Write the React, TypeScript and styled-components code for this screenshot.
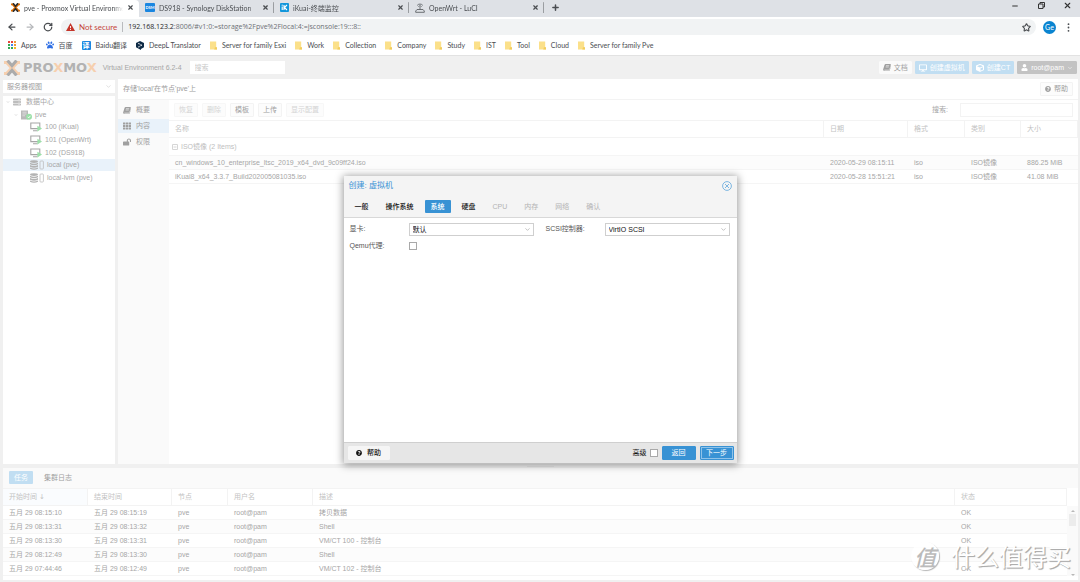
import React from "react";
import styled, { createGlobalStyle, css } from "styled-components";
import {
  FaDesktop,
  FaCube,
  FaUser,
  FaQuestionCircle,
  FaTh,
  FaLockOpen,
  FaServer,
  FaPaw,
} from "react-icons/fa";
import { X, Plus, Minus, ArrowLeft, ArrowRight, RotateCw, Star, ChevronDown } from "lucide-react";

const Global = createGlobalStyle`
  * { box-sizing: border-box; }
  html, body, #root { height: 100%; }
  body {
    margin: 0;
    background: #f0f0f0;
    color: #a6a6a6;
    font: 7px/10px "Liberation Sans", "Noto Sans CJK SC", sans-serif;
  }
  button, input, select { font: inherit; color: inherit; margin: 0; }
  button { cursor: pointer; white-space: nowrap; }
  svg { flex: none; display: block; }
`;

const Page = styled.div`
  min-height: 100%;
  display: flex;
  flex-direction: column;
`;

/* ---------- browser frame ---------- */

const Chrome = styled.header`
  background: #fff;
  color: #4a4d51;
  font-family: Lato, "Noto Sans CJK SC", sans-serif;
  border-bottom: 1px solid #e2e2e2;
`;

const TabStrip = styled.div`
  display: flex;
  align-items: stretch;
  height: 17px;
  background: #dee1e6;
`;

const BrowserTab = styled.div<{ $active?: boolean; $divided?: boolean }>`
  display: flex;
  align-items: center;
  gap: 4px;
  flex: 0 1 ${(p) => (p.$active ? 139 : 135)}px;
  min-width: 0;
  padding: 0 5px 2px ${(p) => (p.$active ? 11 : 6)}px;
  background: ${(p) => (p.$active ? "#fff" : "transparent")};
  border-radius: 0 4px 0 0;
  ${(p) =>
    p.$divided &&
    css`
      background: linear-gradient(#9a9da1, #9a9da1) right 2px / 1px 11px no-repeat;
    `}
`;

const TabTitle = styled.span`
  flex: 1;
  min-width: 0;
  overflow: hidden;
  white-space: nowrap;
  mask-image: linear-gradient(to right, #000 90%, transparent);
`;

const IconButton = styled.button`
  display: flex;
  align-items: center;
  justify-content: center;
  padding: 0;
  border: 0;
  background: none;
`;

const NewTab = styled(IconButton)`
  width: 22px;
  padding-bottom: 2px;
`;

const WindowControls = styled.div`
  display: flex;
  margin-left: auto;
  padding-bottom: 6px;
  color: #333;

  button {
    width: 26px;
  }
`;

const AddressRow = styled.div`
  display: flex;
  align-items: center;
  height: 20px;
  padding: 0 10px 0 7px;
`;

const NavButtons = styled.div`
  display: flex;
  gap: 8px;
  width: 54px;
`;

const AddressBar = styled.div`
  flex: 1;
  display: flex;
  align-items: center;
  height: 16px;
  padding: 0 5px;
  border-radius: 8px;
  background: #f1f3f4;
`;

const Warning = styled.span`
  margin: 0 5px 0 4px;
  padding-right: 5px;
  border-right: 1px solid #b9bbbe;
  color: #c5453a;
  font-size: 8px;
`;

const UrlText = styled.div`
  flex: 1;
  color: #6d7074;
  font-family: "Open Sans", sans-serif;
  white-space: nowrap;

  b {
    color: #25272a;
    font-weight: 400;
  }
`;

const Avatar = styled.button`
  width: 13px;
  height: 13px;
  margin: 0 11px 0 7px;
  padding: 0;
  border: 0;
  border-radius: 50%;
  background: #0a84d0;
  color: #fff;
  line-height: 13px;
`;

const Bookmarks = styled.nav`
  display: flex;
  align-items: center;
  gap: 9px;
  height: 18px;
  padding: 0 8px 2px;
`;

const Bookmark = styled.a`
  display: flex;
  align-items: center;
  gap: 5px;
  color: inherit;
  text-decoration: none;
  white-space: nowrap;
`;

const Badge = styled.span<{ $wide?: boolean }>`
  display: grid;
  place-items: center;
  width: ${(p) => (p.$wide ? 10 : 9)}px;
  height: 9px;
  border-radius: 1px;
  background: #1a86e0;
  color: #fff;
  font-size: ${(p) => (p.$wide ? 4 : 7)}px;
  font-weight: 700;
  line-height: 9px;
`;

/* ---------- application ---------- */

const Console = styled.div`
  position: relative;
  flex: 1;
  display: flex;
  flex-direction: column;
  padding: 0 2px 2px 3px;
`;

const AppHeader = styled.div`
  display: flex;
  align-items: center;
  height: 23px;
  padding-right: 1px;
`;

const Brand = styled.span`
  display: flex;
  align-items: center;
  gap: 3px;
  padding-left: 1px;
  color: #b2b2b2;
  font: 700 13px/14px "DejaVu Sans", sans-serif;

  i {
    color: #f6cfae;
    font-style: normal;
  }
`;

const Version = styled.span`
  margin: 0 8px 0 6px;
  white-space: nowrap;
`;

const TextField = styled.input<{ $width: number }>`
  width: ${(p) => p.$width}px;
  height: ${(p) => (p.$width > 100 ? 14 : 13)}px;
  padding: 0 4px;
  border: 1px solid ${(p) => (p.$width > 100 ? "#f3f3f3" : "#fff")};
  outline: 0;
  background: #fff;

  &::placeholder {
    color: #c9c9c9;
  }
`;

const HeaderActions = styled.div`
  display: flex;
  gap: 3px;
  margin-left: auto;
`;

type Tone = "light" | "blue" | "dark" | "plain";

const tones: Record<Tone, [string, string, string]> = {
  light: ["#fafafa", "#fafafa", "#a0a0a0"],
  blue: ["#c1def2", "#c1def2", "#fff"],
  dark: ["#c3c3c3", "#c3c3c3", "#fff"],
  plain: ["#fcfcfc", "#f3f3f3", "#a0a0a0"],
};

const AppButton = styled.button<{ $tone: Tone }>`
  display: flex;
  align-items: center;
  gap: 3px;
  height: ${(p) => (p.$tone === "plain" ? 14 : 13)}px;
  padding: 0 ${(p) => (p.$tone === "plain" ? 4 : 3)}px;
  border: 1px solid ${(p) => tones[p.$tone][1]};
  border-radius: 1px;
  background: ${(p) => tones[p.$tone][0]};
  color: ${(p) => tones[p.$tone][2]};
  line-height: 10px;

  &:disabled {
    border-color: #f7f7f7;
    color: #d4d4d4;
  }
`;

const Work = styled.div`
  flex: 1;
  display: flex;
  gap: 3px;
  min-height: 0;
`;

const Sidebar = styled.aside`
  display: flex;
  flex-direction: column;
  gap: 3px;
  width: 112px;
  padding-top: 1px;
`;

const SelectBox = styled.div<{ $framed?: boolean }>`
  flex: 1;
  display: grid;
  align-items: center;
  height: 13px;
  border: 1px solid ${(p) => (p.$framed ? "#cfcfcf" : "#fff")};
  background: #fff;
  color: ${(p) => (p.$framed ? "#111" : "#9d9d9d")};

  select {
    grid-area: 1 / 1;
    width: 100%;
    height: 11px;
    padding: 0 12px 0 3px;
    appearance: none;
    border: 0;
    outline: 0;
    background: none;
    line-height: 11px;
  }

  svg {
    grid-area: 1 / 1;
    justify-self: end;
    margin-right: 2px;
    color: #999;
    pointer-events: none;
    opacity: ${(p) => (p.$framed ? 1 : 0.5)};
  }
`;

const SidebarSelect = styled(SelectBox)`
  flex: none;
`;

const Tree = styled.div`
  flex: 1;
  background: #fff;
`;

const TreeRows = styled.ul`
  display: grid;
  grid-auto-rows: 1fr;
  height: 88px;
  margin: 0;
  padding: 0;
  list-style: none;
`;

const TreeRow = styled.li<{ $depth: number; $selected?: boolean; $gap?: number }>`
  display: flex;
  align-items: center;
  gap: ${(p) => p.$gap ?? 3}px;
  padding-left: ${(p) => [3, 11, 27][p.$depth]}px;
  background: ${(p) => (p.$selected ? "#e9f2fa" : "transparent")};
  white-space: nowrap;
`;

const Main = styled.main`
  flex: 1;
  display: flex;
  flex-direction: column;
  min-width: 0;
  background: #fff;
`;

const MainTitle = styled.div`
  display: flex;
  align-items: center;
  justify-content: space-between;
  height: 21px;
  padding: 0 5px;
  border-bottom: 1px solid #f3f3f3;
  color: #9d9d9d;
`;

const MainBody = styled.div`
  flex: 1;
  display: flex;
`;

const SideMenu = styled.nav`
  display: flex;
  flex-direction: column;
  gap: 2px;
  width: 51px;
  padding-top: 3px;
  background: #fafafa;
`;

const MenuItem = styled.a<{ $active?: boolean }>`
  display: flex;
  align-items: center;
  gap: 5px;
  height: 14px;
  padding-left: 5px;
  background: ${(p) => (p.$active ? "#e9f2fa" : "transparent")};
  color: #a0a0a0;
  text-decoration: none;
`;

const Content = styled.section`
  flex: 1;
  min-width: 0;
`;

const Toolbar = styled.div`
  display: flex;
  align-items: center;
  gap: 4px;
  height: 21px;
  padding: 0 5px;
  border-bottom: 1px solid #f3f3f3;
`;

const SearchLabel = styled.label`
  display: flex;
  align-items: center;
  gap: 12px;
  margin-left: auto;
`;

const Grid = styled.table`
  width: 100%;
  table-layout: fixed;
  border-spacing: 0;
  text-align: left;
  white-space: nowrap;

  th {
    height: 17px;
    padding: 0 6px;
    border-bottom: 1px solid #f3f3f3;
    border-right: 1px solid #f3f3f3;
    color: #c3c3c3;
    font-weight: 400;
  }

  td {
    height: 14px;
    padding: 0 6px;
    border-bottom: 1px solid #f5f5f5;
    overflow: hidden;
  }

  tbody tr:nth-child(even) td {
    background: #fcfcfc;
  }
`;

const GroupCell = styled.td`
  && {
    height: 18px;
    padding: 0 3px;
    color: #c0c0c0;
  }

  div {
    display: flex;
    align-items: center;
    gap: 3px;
  }
`;

const Splitter = styled.div`
  display: grid;
  place-items: center;
  height: 4px;

  span {
    width: 27px;
    height: 1px;
    background: #e6e6e6;
  }
`;

const LogPanel = styled.section`
  background: #fff;
`;

const LogTabs = styled.div`
  display: flex;
  align-items: center;
  gap: 6px;
  height: 20px;
  padding: 0 6px 1px;
  background: #fafafa;
`;

const LogTab = styled.button<{ $active?: boolean }>`
  height: 13px;
  padding: 0 5px;
  border: 0;
  border-radius: 1px;
  background: ${(p) => (p.$active ? "#c1def2" : "transparent")};
  color: ${(p) => (p.$active ? "#fff" : "#a0a0a0")};
  line-height: 13px;
`;

const LogBody = styled.div`
  display: flex;
  padding-bottom: 4px;
`;

const LogGrid = styled(Grid)`
  th {
    height: 18px;
    border-top: 1px solid #f3f3f3;
  }

  th:first-child {
    background: #fafcfe;
  }
`;

const SortMark = styled.span`
  margin-left: 2px;
  font-family: "DejaVu Sans", sans-serif;
`;

const Scrollbar = styled.div`
  display: flex;
  flex-direction: column;
  align-items: center;
  width: 11px;
  margin-top: 18px;
  padding: 4px 0 0;
  background: #fafafa;
  color: #b8b8b8;

  span {
    width: 7px;
    height: 12px;
    margin: 2px 0 auto;
    background: #ececec;
  }
`;

/* ---------- wizard ---------- */

const Overlay = styled.div`
  position: absolute;
  inset: 0;
  display: grid;
  place-items: center;
`;

const Dialog = styled.section`
  width: 393px;
  background: #fff;
  color: #555;
  box-shadow: 0 1px 8px 1px rgba(0, 0, 0, 0.4);
`;

const DialogHead = styled.header`
  padding: 0 5px 4px;
  border-bottom: 1px solid #d8d8d8;
  background: #f4f4f4;
`;

const DialogTitle = styled.div`
  display: flex;
  align-items: center;
  justify-content: space-between;
  height: 20px;
  margin-bottom: 4px;
  color: #3892d4;

  h2 {
    margin: 0;
    font-size: 8px;
    font-weight: 400;
  }
`;

const Steps = styled.div`
  display: flex;
  gap: 5px;
`;

const Step = styled.button<{ $active?: boolean }>`
  height: 13px;
  padding: 0 6px;
  border: 0;
  border-radius: 1px;
  background: ${(p) => (p.$active ? "#3892d4" : "transparent")};
  color: ${(p) => (p.$active ? "#fff" : "#111")};
  font-weight: 500;
  line-height: 13px;

  &:disabled {
    color: #b3b3b3;
    font-weight: 400;
  }
`;

const Form = styled.form`
  display: grid;
  grid-template-columns: 1fr 1fr;
  align-content: start;
  gap: 4px 12px;
  min-height: 224px;
  padding: 5px 7px 5px 6px;
`;

const Field = styled.div`
  display: flex;
  align-items: center;
  height: 13px;

  label {
    width: 59px;
  }
`;

const Tick = styled.input`
  width: 8px;
  height: 8px;
  appearance: none;
  border: 1px solid #a9a9a9;
  background: #fff;
`;

const DialogFoot = styled.footer`
  display: flex;
  align-items: center;
  gap: 4px;
  height: 21px;
  padding: 0 3px 0 4px;
  border-top: 1px solid #cfcfcf;
  background: #e6e6e6;
  color: #111;
`;

const AdvancedLabel = styled.label`
  display: flex;
  align-items: center;
  gap: 3px;
  margin-left: auto;
`;

const FootButton = styled.button<{ $primary?: boolean; $focused?: boolean }>`
  display: flex;
  align-items: center;
  justify-content: center;
  gap: 5px;
  width: ${(p) => (p.$primary ? 34 : 42)}px;
  height: 14px;
  padding: 0;
  border: 1px solid ${(p) => (p.$primary ? "#3892d4" : "#f5f5f5")};
  border-radius: 1px;
  background: ${(p) => (p.$primary ? "#3892d4" : "#f5f5f5")};
  color: ${(p) => (p.$primary ? "#fff" : "#111")};
  font-weight: ${(p) => (p.$primary ? 400 : 500)};
  ${(p) =>
    p.$focused &&
    css`
      box-shadow: inset 0 0 0 1px #8fc2e8;
    `}
`;

const Watermark = styled.div`
  position: absolute;
  right: 9px;
  bottom: 9px;
  display: flex;
  align-items: center;
  gap: 12px;
  color: #fff;
  font: 400 24px/34px "Noto Sans CJK SC", sans-serif;
  text-shadow: 1px 1px 1px #aaa, 1px 1px 0 #c4c4c4;
  pointer-events: none;
`;

const WatermarkSeal = styled.span`
  display: grid;
  place-items: center;
  width: 28px;
  height: 28px;
  border-radius: 50%;
  background: rgba(255, 255, 255, 0.8);
  box-shadow: 1px 1px 1px #b5b5b5;
  color: #bbb;
  font-size: 22px;
  font-style: italic;
  font-weight: 500;
  line-height: 28px;
  text-shadow: none;
`;

/* ---------- drawings ---------- */

const ProxmoxMark = ({ size, faded }: { size: number; faded?: boolean }) => (
  <svg width={size} height={size} viewBox="0 0 16 16" fill="none" strokeWidth="3" aria-hidden="true">
    <path d="M0 2.5H2.6L7.6 8L2.6 13.5H0M16 2.5H13.4L8.4 8L13.4 13.5H16" stroke={faded ? "#f6cfae" : "#e57000"} />
    <path d="M3.5 0.5L8 5.7L12.5 0.5M3.5 15.5L8 10.3L12.5 15.5" stroke={faded ? "#ababab" : "#2b2b2b"} />
  </svg>
);

const BookIcon = () => (
  <svg width="8" height="7" viewBox="0 0 8 7" aria-hidden="true">
    <path d="M2.6 0H7.3Q8 .2 7.8 .9L6.4 5.2Q6.2 5.8 5.5 5.8H1.3Q1 6.3 1.6 6.4H6.3L7.9 1.6V2.4L6.7 6.4Q6.5 7 5.9 7H1.3Q0 6.8 .1 5.5L1.6 .8Q1.9 0 2.6 0z" fill="currentColor" />
    <path d="M3 1.7H6.2M2.6 3H5.8" stroke="#fafafa" strokeWidth=".6" />
  </svg>
);

const FolderIcon = () => (
  <svg width="7" height="9" viewBox="0 0 7 9" aria-hidden="true">
    <path d="M0 .5h6.2v6H7V8.5H0z" fill="#fbe08a" />
    <path d="M5 6.2h2v2.3H4.2z" fill="#f3cd5c" />
  </svg>
);

const AppsIcon = () => {
  const colors = ["#e8453c", "#e8453c", "#f09a38", "#34a853", "#4285f4", "#f09a38", "#34a853", "#34a853", "#f2b928"];
  return (
    <svg width="8" height="8" viewBox="0 0 8 8" aria-hidden="true">
      {colors.map((c, i) => (
        <rect key={i} x={(i % 3) * 3} y={Math.floor(i / 3) * 3} width="2" height="2" fill={c} />
      ))}
    </svg>
  );
};

const DeepLIcon = () => (
  <svg width="8" height="9" viewBox="0 0 8 9" aria-hidden="true">
    <path d="M4 0L8 2v4.2L5 8v1L0 6.2V2z" fill="#0f2b46" />
    <path d="M2.8 2.6L5.4 4.2L2.8 5.8" stroke="#fff" strokeWidth=".5" fill="none" />
    <circle cx="2.8" cy="2.6" r=".6" fill="#fff" />
    <circle cx="5.4" cy="4.2" r=".6" fill="#fff" />
    <circle cx="2.8" cy="5.8" r=".6" fill="#fff" />
  </svg>
);

const IkuaiIcon = () => (
  <svg width="9" height="9" viewBox="0 0 9 9" aria-hidden="true">
    <rect width="9" height="9" rx="1" fill="#1296db" />
    <path d="M2.2 3.6V7M4 2V7M7 2L4.4 4.5L7 7" stroke="#fff" strokeWidth="1.1" fill="none" />
    <circle cx="2.2" cy="2.2" r=".6" fill="#fff" />
  </svg>
);

const RouterIcon = () => (
  <svg width="10" height="10" viewBox="0 0 10 10" fill="none" stroke="#5f6368" strokeWidth=".9" aria-hidden="true">
    <path d="M5 3.5V6.5M3.4 3.6a2 2 0 0 1 3.2 0M2.2 2.4a3.6 3.6 0 0 1 5.6 0" />
    <path d="M2 6.5H8L9.3 8V9.3H.7V8z" />
  </svg>
);

const WarnIcon = () => (
  <svg width="9" height="8" viewBox="0 0 9 8" aria-hidden="true">
    <path d="M4.5 0L9 8H0z" fill="#c5362b" />
    <path d="M4.5 3V5.2M4.5 6V7" stroke="#fff" strokeWidth=".9" />
  </svg>
);

const RestoreIcon = () => (
  <svg width="7" height="7" viewBox="0 0 7 7" fill="none" stroke="currentColor" aria-hidden="true">
    <path d="M.5 2H5V6.5H.5zM2 2V.5H6.5V5H5" />
  </svg>
);

const DotsIcon = () => (
  <svg width="3" height="9" viewBox="0 0 3 9" fill="#4a4d51" aria-hidden="true">
    <circle cx="1.5" cy="1.2" r=".9" />
    <circle cx="1.5" cy="4.5" r=".9" />
    <circle cx="1.5" cy="7.8" r=".9" />
  </svg>
);

const VmIcon = () => (
  <svg width="12" height="10" viewBox="0 0 12 10" aria-hidden="true">
    <path d="M.8 1H9.8V6.6H.8zM3 8.8H7.6" fill="none" stroke="#a5a5a5" strokeWidth="1.1" />
    <path d="M7.4 3.8L12 6.6L7.4 9.6z" fill="#9be0a8" />
  </svg>
);

const NodeIcon = () => (
  <svg width="11" height="10" viewBox="0 0 11 10" aria-hidden="true">
    <path d="M0 .5H7V9.5H0z" fill="#b9b9b9" />
    <path d="M1.4 2.2H5.6M1.4 4H5.6M1.4 5.8H4" stroke="#e4e4e4" strokeWidth=".8" />
    <circle cx="8" cy="6.8" r="3" fill="#9be0a8" />
    <path d="M6.7 6.8L7.7 7.9L9.4 5.8" stroke="#fff" strokeWidth=".9" fill="none" />
  </svg>
);

const StorageIcon = () => (
  <svg width="14" height="10" viewBox="0 0 14 10" aria-hidden="true">
    <g fill="#b3b3b3">
      <ellipse cx="4" cy="1.6" rx="4" ry="1.4" />
      <path d="M0 2.7q4 2 8 0V4.3q-4 2-8 0zM0 5.1q4 2 8 0V6.7q-4 2-8 0zM0 7.5q4 2 8 0V8.8q-4 1.8-8 0z" />
    </g>
    <rect x="10" y="1" width="3.4" height="8" rx=".8" fill="none" stroke="#bdbdbd" strokeWidth=".8" />
  </svg>
);

const CollapseIcon = () => (
  <svg width="6" height="6" viewBox="0 0 6 6" fill="none" stroke="#d6d6d6" aria-hidden="true">
    <path d="M.5 .5H5.5V5.5H.5zM1.5 3H4.5" />
  </svg>
);

const CloseRing = () => (
  <svg width="10" height="10" viewBox="0 0 10 10" fill="none" stroke="#6fafdf" strokeWidth=".9" aria-hidden="true">
    <circle cx="5" cy="5" r="4.4" />
    <path d="M3 3L7 7M7 3L3 7" />
  </svg>
);

const Arrow = ({ up }: { up?: boolean }) => (
  <svg width="4" height="2" viewBox="0 0 4 2" fill="currentColor" aria-hidden="true">
    <path d={up ? "M2 0L4 2H0z" : "M0 0H4L2 2z"} />
  </svg>
);

/* ---------- data ---------- */

const folders = [
  "Server for family Esxi",
  "Work",
  "Collection",
  "Company",
  "Study",
  "IST",
  "Tool",
  "Cloud",
  "Server for family Pve",
];

const files = [
  ["cn_windows_10_enterprise_ltsc_2019_x64_dvd_9c09ff24.iso", "2020-05-29 08:15:11", "iso", "ISO镜像", "886.25 MiB"],
  ["iKuai8_x64_3.3.7_Build202005081035.iso", "2020-05-28 15:51:21", "iso", "ISO镜像", "41.08 MiB"],
];

const logs = [
  ["五月 29 08:15:10", "五月 29 08:15:19", "pve", "root@pam", "拷贝数据", "OK"],
  ["五月 29 08:13:31", "五月 29 08:13:32", "pve", "root@pam", "Shell", "OK"],
  ["五月 29 08:13:30", "五月 29 08:13:31", "pve", "root@pam", "VM/CT 100 - 控制台", "OK"],
  ["五月 29 08:12:49", "五月 29 08:13:30", "pve", "root@pam", "Shell", "OK"],
  ["五月 29 07:44:46", "五月 29 08:12:49", "pve", "root@pam", "VM/CT 102 - 控制台", "OK"],
];

const CloseTab = () => (
  <IconButton aria-label="Close tab">
    <X size={7} strokeWidth={4} />
  </IconButton>
);

export default function App() {
  return (
    <Page>
      <Global />
      <Chrome>
        <TabStrip>
          <BrowserTab $active>
            <ProxmoxMark size={9} />
            <TabTitle>pve - Proxmox Virtual Environment</TabTitle>
            <CloseTab />
          </BrowserTab>
          <BrowserTab $divided>
            <Badge $wide>DSM</Badge>
            <TabTitle>DS918 - Synology DiskStation</TabTitle>
            <CloseTab />
          </BrowserTab>
          <BrowserTab $divided>
            <IkuaiIcon />
            <TabTitle>iKuai-终端监控</TabTitle>
            <CloseTab />
          </BrowserTab>
          <BrowserTab $divided>
            <RouterIcon />
            <TabTitle>OpenWrt - LuCI</TabTitle>
            <CloseTab />
          </BrowserTab>
          <NewTab aria-label="New tab">
            <Plus size={9} strokeWidth={4} />
          </NewTab>
          <WindowControls>
            <IconButton aria-label="Minimize">
              <Minus size={8} strokeWidth={3} />
            </IconButton>
            <IconButton aria-label="Restore">
              <RestoreIcon />
            </IconButton>
            <IconButton aria-label="Close">
              <X size={9} strokeWidth={3} />
            </IconButton>
          </WindowControls>
        </TabStrip>
        <AddressRow>
          <NavButtons>
            <IconButton aria-label="Back">
              <ArrowLeft size={10} strokeWidth={3} />
            </IconButton>
            <IconButton aria-label="Forward">
              <ArrowRight size={10} strokeWidth={3} color="#b5b7ba" />
            </IconButton>
            <IconButton aria-label="Reload">
              <RotateCw size={10} strokeWidth={3} />
            </IconButton>
          </NavButtons>
          <AddressBar>
            <WarnIcon />
            <Warning>Not secure</Warning>
            <UrlText>
              <b>192.168.123.2</b>:8006/#v1:0:=storage%2Fpve%2Flocal:4:=jsconsole:19:::8::
            </UrlText>
            <IconButton aria-label="Bookmark this page">
              <Star size={9} strokeWidth={3} />
            </IconButton>
          </AddressBar>
          <Avatar>Ge</Avatar>
          <IconButton aria-label="Menu">
            <DotsIcon />
          </IconButton>
        </AddressRow>
        <Bookmarks>
          <Bookmark href="#">
            <AppsIcon />
            Apps
          </Bookmark>
          <Bookmark href="#">
            <FaPaw size={8} color="#2f6fe4" />
            百度
          </Bookmark>
          <Bookmark href="#">
            <Badge>译</Badge>
            Baidu翻译
          </Bookmark>
          <Bookmark href="#">
            <DeepLIcon />
            DeepL Translator
          </Bookmark>
          {folders.map((name) => (
            <Bookmark href="#" key={name}>
              <FolderIcon />
              {name}
            </Bookmark>
          ))}
        </Bookmarks>
      </Chrome>

      <Console>
        <AppHeader>
          <Brand>
            <ProxmoxMark size={16} faded />
            <span>
              PRO<i>X</i>MO<i>X</i>
            </span>
          </Brand>
          <Version>Virtual Environment 6.2-4</Version>
          <TextField $width={95} placeholder="搜索" aria-label="搜索" />
          <HeaderActions>
            <AppButton $tone="light">
              <BookIcon />
              文档
            </AppButton>
            <AppButton $tone="blue">
              <FaDesktop size={8} />
              创建虚拟机
            </AppButton>
            <AppButton $tone="blue">
              <FaCube size={8} />
              创建CT
            </AppButton>
            <AppButton $tone="dark">
              <FaUser size={7} />
              root@pam
              <ChevronDown size={6} strokeWidth={2} />
            </AppButton>
          </HeaderActions>
        </AppHeader>

        <Work>
          <Sidebar>
            <SidebarSelect>
              <select aria-label="视图" defaultValue="server">
                <option value="server">服务器视图</option>
              </select>
              <ChevronDown size={7} />
            </SidebarSelect>
            <Tree>
              <TreeRows>
                <TreeRow $depth={0}>
                  <ChevronDown size={4} />
                  <FaServer size={8} color="#bdbdbd" />
                  <span>&nbsp;数据中心</span>
                </TreeRow>
                <TreeRow $depth={1}>
                  <ChevronDown size={4} />
                  <NodeIcon />
                  pve
                </TreeRow>
                {["100 (iKuai)", "101 (OpenWrt)", "102 (DS918)"].map((vm) => (
                  <TreeRow $depth={2} key={vm}>
                    <VmIcon />
                    {vm}
                  </TreeRow>
                ))}
                <TreeRow $depth={2} $selected>
                  <StorageIcon />
                  local (pve)
                </TreeRow>
                <TreeRow $depth={2}>
                  <StorageIcon />
                  local-lvm (pve)
                </TreeRow>
              </TreeRows>
            </Tree>
          </Sidebar>

          <Main>
            <MainTitle>
              <span>存储'local'在节点'pve'上</span>
              <AppButton $tone="plain">
                <FaQuestionCircle size={6} />
                帮助
              </AppButton>
            </MainTitle>
            <MainBody>
              <SideMenu>
                <MenuItem href="#">
                  <BookIcon />
                  概要
                </MenuItem>
                <MenuItem href="#" $active>
                  <FaTh size={8} />
                  内容
                </MenuItem>
                <MenuItem href="#">
                  <FaLockOpen size={8} />
                  权限
                </MenuItem>
              </SideMenu>
              <Content>
                <Toolbar>
                  <AppButton $tone="plain" disabled>恢复</AppButton>
                  <AppButton $tone="plain" disabled>删除</AppButton>
                  <AppButton $tone="plain">模板</AppButton>
                  <AppButton $tone="plain">上传</AppButton>
                  <AppButton $tone="plain" disabled>显示配置</AppButton>
                  <SearchLabel>
                    搜索:
                    <TextField $width={113} />
                  </SearchLabel>
                </Toolbar>
                <Grid>
                  <colgroup>
                    <col />
                    <col width="84" />
                    <col width="57" />
                    <col width="56" />
                    <col width="57" />
                  </colgroup>
                  <thead>
                    <tr>
                      <th>名称</th>
                      <th>日期</th>
                      <th>格式</th>
                      <th>类别</th>
                      <th>大小</th>
                    </tr>
                  </thead>
                  <tbody>
                    <tr>
                      <GroupCell colSpan={5}>
                        <div>
                          <CollapseIcon />
                          ISO镜像 (2 Items)
                        </div>
                      </GroupCell>
                    </tr>
                    {files.map((row) => (
                      <tr key={row[0]}>
                        {row.map((cell, i) => (
                          <td key={i}>{cell}</td>
                        ))}
                      </tr>
                    ))}
                  </tbody>
                </Grid>
              </Content>
            </MainBody>
          </Main>
        </Work>

        <Splitter>
          <span />
        </Splitter>

        <LogPanel>
          <LogTabs>
            <LogTab $active>任务</LogTab>
            <LogTab>集群日志</LogTab>
          </LogTabs>
          <LogBody>
            <LogGrid>
              <colgroup>
                <col width="85" />
                <col width="84" />
                <col width="56" />
                <col width="85" />
                <col />
                <col width="112" />
              </colgroup>
              <thead>
                <tr>
                  <th>
                    开始时间<SortMark>↓</SortMark>
                  </th>
                  <th>结束时间</th>
                  <th>节点</th>
                  <th>用户名</th>
                  <th>描述</th>
                  <th>状态</th>
                </tr>
              </thead>
              <tbody>
                {logs.map((row) => (
                  <tr key={row[0]}>
                    {row.map((cell, i) => (
                      <td key={i}>{cell}</td>
                    ))}
                  </tr>
                ))}
              </tbody>
            </LogGrid>
            <Scrollbar>
              <Arrow up />
              <span />
              <Arrow />
            </Scrollbar>
          </LogBody>
        </LogPanel>

        <Overlay>
          <Dialog role="dialog" aria-labelledby="wizard-title">
            <DialogHead>
              <DialogTitle>
                <h2 id="wizard-title">创建: 虚拟机</h2>
                <IconButton aria-label="关闭">
                  <CloseRing />
                </IconButton>
              </DialogTitle>
              <Steps>
                <Step>一般</Step>
                <Step>操作系统</Step>
                <Step $active>系统</Step>
                <Step>硬盘</Step>
                <Step disabled>CPU</Step>
                <Step disabled>内存</Step>
                <Step disabled>网络</Step>
                <Step disabled>确认</Step>
              </Steps>
            </DialogHead>
            <Form>
              <Field>
                <label htmlFor="display">显卡:</label>
                <SelectBox $framed>
                  <select id="display" defaultValue="default">
                    <option value="default">默认</option>
                  </select>
                  <ChevronDown size={7} />
                </SelectBox>
              </Field>
              <Field>
                <label htmlFor="scsi">SCSI控制器:</label>
                <SelectBox $framed>
                  <select id="scsi" defaultValue="virtio">
                    <option value="virtio">VirtIO SCSI</option>
                  </select>
                  <ChevronDown size={7} />
                </SelectBox>
              </Field>
              <Field>
                <label htmlFor="agent">Qemu代理:</label>
                <Tick id="agent" type="checkbox" />
              </Field>
            </Form>
            <DialogFoot>
              <FootButton>
                <FaQuestionCircle size={6} />
                帮助
              </FootButton>
              <AdvancedLabel>
                高级
                <Tick type="checkbox" />
              </AdvancedLabel>
              <FootButton $primary>返回</FootButton>
              <FootButton $primary $focused>下一步</FootButton>
            </DialogFoot>
          </Dialog>
        </Overlay>

        <Watermark>
          <WatermarkSeal>值</WatermarkSeal>
          <span>什么值得买</span>
        </Watermark>
      </Console>
    </Page>
  );
}
